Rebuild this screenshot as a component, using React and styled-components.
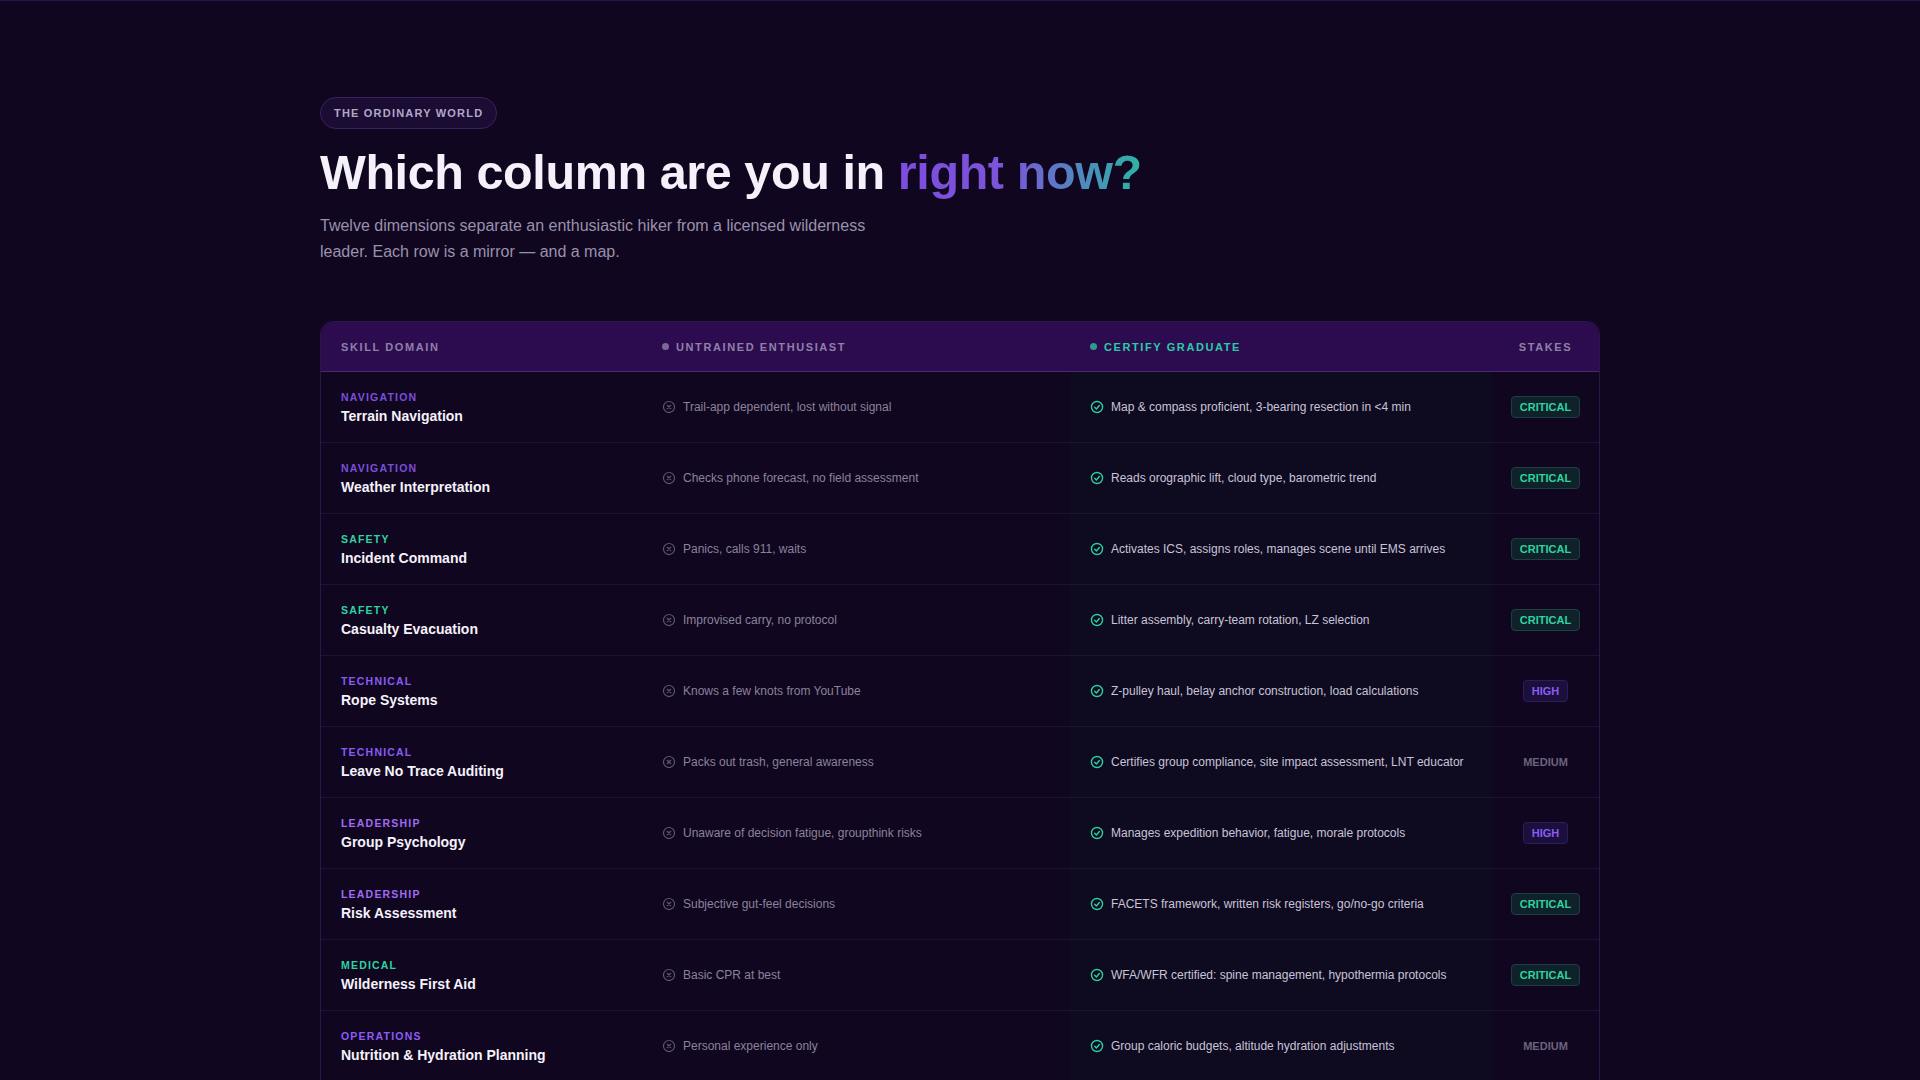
import React from 'react';
import styled, { createGlobalStyle } from 'styled-components';

const GlobalStyle = createGlobalStyle`
  body {
    margin: 0;
    background: #10061f;
    font-family: "Liberation Sans", Arial, sans-serif;
    color: #f1eef8;
  }
`;

const Page = styled.div`
  min-height: 100vh;
  border-top: 1px solid #2a1450;
  padding: 96px 320px 60px;
  box-sizing: border-box;
`;

const Eyebrow = styled.span`
  display: inline-block;
  padding: 9px 13px;
  border: 1px solid #3a2160;
  border-radius: 16px;
  background: #1a0c32;
  color: #b3a7c9;
  font-size: 11px;
  font-weight: 700;
  letter-spacing: 1.2px;
`;

const Title = styled.h1`
  margin: 14px 0 0;
  font-size: 48.5px;
  line-height: 1.2;
  font-weight: 700;
  letter-spacing: -0.4px;
  color: #f4f1fa;
`;

const Accent = styled.span`
  background: linear-gradient(90deg, #7c4ddf 0%, #7b55d8 45%, #2bb5a4 100%);
  -webkit-background-clip: text;
  background-clip: text;
  color: transparent;
`;

const Lead = styled.p`
  margin: 12px 0 0;
  max-width: 560px;
  font-size: 16px;
  line-height: 26px;
  color: #9a91ad;
`;

const Table = styled.div`
  margin-top: 56px;
  border: 1px solid #2a1748;
  border-bottom: none;
  border-radius: 14px 14px 0 0;
  overflow: hidden;
`;

const Grid = styled.div`
  display: grid;
  grid-template-columns: 321px 428px 422px 1fr;
  align-items: stretch;
`;

const Head = styled(Grid)`
  background: #2c0c4f;
  border-bottom: 1px solid #4a2a78;
  height: 49px;
`;

const HeadCell = styled.div`
  display: flex;
  align-items: center;
  justify-content: ${p => (p.center ? 'center' : 'flex-start')};
  gap: 7px;
  padding-left: ${p => (p.center ? '0' : '20px')};
  font-size: 11px;
  font-weight: 700;
  letter-spacing: 1.6px;
  color: ${p => p.color || '#8f80aa'};
`;

const Dot = styled.span`
  width: 7px;
  height: 7px;
  border-radius: 50%;
  background: ${p => p.color};
`;

const Row = styled(Grid)`
  height: 70px;
  border-bottom: 1px solid #1d1234;
`;

const Cell = styled.div`
  display: flex;
  align-items: center;
  gap: 7px;
  font-size: 12px;
  background: ${p => p.bg || 'transparent'};
  color: ${p => p.color || '#8b829c'};
  justify-content: ${p => (p.center ? 'center' : 'flex-start')};
  padding-left: ${p => (p.center ? '0' : '20px')};
`;

const Skill = styled.div`
  display: flex;
  flex-direction: column;
  justify-content: center;
  padding-left: 20px;
  gap: 5px;
`;

const Category = styled.div`
  font-size: 10.5px;
  font-weight: 700;
  letter-spacing: 1.2px;
  color: ${p => p.color};
`;

const Name = styled.div`
  font-size: 14px;
  font-weight: 700;
  color: #f5f2fb;
`;

const Pill = styled.span`
  font-size: 11px;
  font-weight: 700;
  padding: ${p => (p.plain ? '0' : '4px 8px')};
  border-radius: 4px;
  ${p => p.level === 'CRITICAL' && 'color:#2ed3a2;background:#0f2229;border:1px solid #1f3d44;'}
  ${p => p.level === 'HIGH' && 'color:#8c5cf0;background:#1b0f3c;border:1px solid #2e1c5c;'}
  ${p => p.level === 'MEDIUM' && 'color:#6b6280;'}
`;

const XIcon = () => (
  <svg width="14" height="14" viewBox="0 0 24 24" fill="none" stroke="#5e5672" strokeWidth="2" strokeLinecap="round">
    <circle cx="12" cy="12" r="9.5" />
    <path d="M9 9l6 6M15 9l-6 6" />
  </svg>
);

const CheckIcon = () => (
  <svg width="14" height="14" viewBox="0 0 24 24" fill="none" stroke="#2ccf9f" strokeWidth="2.4" strokeLinecap="round" strokeLinejoin="round">
    <circle cx="12" cy="12" r="9.5" />
    <path d="M8 12.5l3 3 5-6" />
  </svg>
);

const cat = {
  NAVIGATION: '#7a4fdb',
  SAFETY: '#2ed3a2',
  TECHNICAL: '#8b5cf6',
  LEADERSHIP: '#a06bf2',
  MEDICAL: '#2ed3a2',
  OPERATIONS: '#8b5cf6'
};

const rows = [
  ['NAVIGATION', 'Terrain Navigation', 'Trail-app dependent, lost without signal', 'Map & compass proficient, 3-bearing resection in <4 min', 'CRITICAL'],
  ['NAVIGATION', 'Weather Interpretation', 'Checks phone forecast, no field assessment', 'Reads orographic lift, cloud type, barometric trend', 'CRITICAL'],
  ['SAFETY', 'Incident Command', 'Panics, calls 911, waits', 'Activates ICS, assigns roles, manages scene until EMS arrives', 'CRITICAL'],
  ['SAFETY', 'Casualty Evacuation', 'Improvised carry, no protocol', 'Litter assembly, carry-team rotation, LZ selection', 'CRITICAL'],
  ['TECHNICAL', 'Rope Systems', 'Knows a few knots from YouTube', 'Z-pulley haul, belay anchor construction, load calculations', 'HIGH'],
  ['TECHNICAL', 'Leave No Trace Auditing', 'Packs out trash, general awareness', 'Certifies group compliance, site impact assessment, LNT educator', 'MEDIUM'],
  ['LEADERSHIP', 'Group Psychology', 'Unaware of decision fatigue, groupthink risks', 'Manages expedition behavior, fatigue, morale protocols', 'HIGH'],
  ['LEADERSHIP', 'Risk Assessment', 'Subjective gut-feel decisions', 'FACETS framework, written risk registers, go/no-go criteria', 'CRITICAL'],
  ['MEDICAL', 'Wilderness First Aid', 'Basic CPR at best', 'WFA/WFR certified: spine management, hypothermia protocols', 'CRITICAL'],
  ['OPERATIONS', 'Nutrition & Hydration Planning', 'Personal experience only', 'Group caloric budgets, altitude hydration adjustments', 'MEDIUM'],
  ['OPERATIONS', 'Gear Systems', 'Buys what the store recommends', 'Builds group kits, redundancy planning, field repair', 'HIGH'],
  ['LEADERSHIP', 'Client Communication', 'Shares stories around the fire', 'Pre-trip briefings, expectation setting, debriefs', 'HIGH']
];

export default function App() {
  return (
    <Page>
      <GlobalStyle />
      <Eyebrow>THE ORDINARY WORLD</Eyebrow>
      <Title>
        Which column are you in <Accent>right now?</Accent>
      </Title>
      <Lead>
        Twelve dimensions separate an enthusiastic hiker from a licensed wilderness leader. Each row is a mirror — and a map.
      </Lead>
      <Table>
        <Head>
          <HeadCell>SKILL DOMAIN</HeadCell>
          <HeadCell><Dot color="#7a6a94" />UNTRAINED ENTHUSIAST</HeadCell>
          <HeadCell color="#2ec9a8"><Dot color="#2a9c8f" />CERTIFY GRADUATE</HeadCell>
          <HeadCell center>STAKES</HeadCell>
        </Head>
        {rows.map(([c, name, un, cert, level]) => (
          <Row key={name}>
            <Skill>
              <Category color={cat[c]}>{c}</Category>
              <Name>{name}</Name>
            </Skill>
            <Cell><XIcon />{un}</Cell>
            <Cell bg="#0e0a20" color="#c9c4d6"><CheckIcon />{cert}</Cell>
            <Cell center>
              <Pill level={level} plain={level === 'MEDIUM'}>{level}</Pill>
            </Cell>
          </Row>
        ))}
      </Table>
    </Page>
  );
}
